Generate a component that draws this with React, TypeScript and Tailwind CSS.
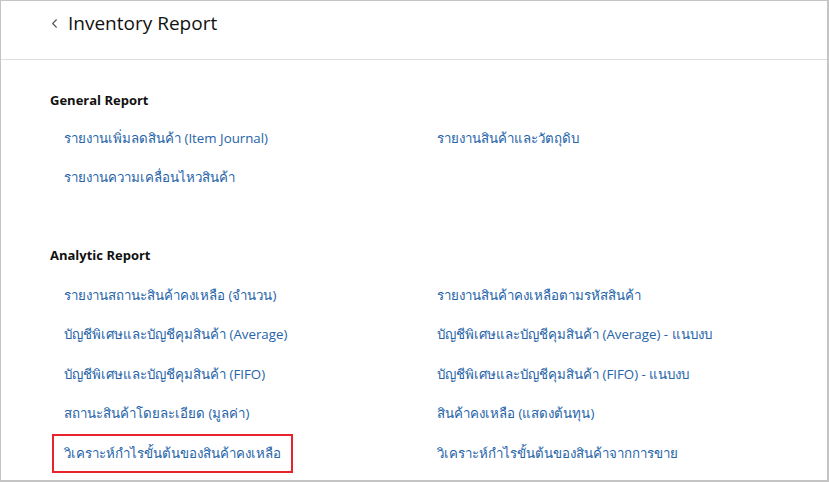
import { ChevronLeft } from "lucide-react";

const general: [string, string | null][] = [
  ["รายงานเพิ่มลดสินค้า (Item Journal)", "รายงานสินค้าและวัตถุดิบ"],
  ["รายงานความเคลื่อนไหวสินค้า", null],
];

const analytic: [string, string][] = [
  ["รายงานสถานะสินค้าคงเหลือ (จำนวน)", "รายงานสินค้าคงเหลือตามรหัสสินค้า"],
  ["บัญชีพิเศษและบัญชีคุมสินค้า (Average)", "บัญชีพิเศษและบัญชีคุมสินค้า (Average) - แนบงบ"],
  ["บัญชีพิเศษและบัญชีคุมสินค้า (FIFO)", "บัญชีพิเศษและบัญชีคุมสินค้า (FIFO) - แนบงบ"],
  ["สถานะสินค้าโดยละเอียด (มูลค่า)", "สินค้าคงเหลือ (แสดงต้นทุน)"],
  ["วิเคราะห์กำไรขั้นต้นของสินค้าคงเหลือ", "วิเคราะห์กำไรขั้นต้นของสินค้าจากการขาย"],
];

function ReportLink({ label, boxed }: { label: string; boxed?: boolean }) {
  return (
    <div className="h-[39.5px] flex items-center">
      <a
        href="#"
        className={
          boxed
            ? "text-[13.3px] text-[#2563a8] border-2 border-[#e8232b] h-[39px] flex items-center pl-[10px] pr-[10px] -ml-[12px]"
            : "text-[13.3px] text-[#2563a8]"
        }
      >
        {label}
      </a>
    </div>
  );
}

export default function App() {
  return (
    <div
      className="w-[829px] h-[482px] bg-white border-t border-l border-b-2 border-r-2 border-[#c4c4c4] overflow-hidden"
      style={{ fontFamily: '"Open Sans", "Noto Sans", "Liberation Sans", sans-serif' }}
    >
      <header className="h-[59px] flex items-start pt-[8px] pl-[46px] gap-[6px] border-b border-[#dedede]">
        <ChevronLeft className="w-[15px] h-[15px] mt-[7px] text-[#555]" strokeWidth={1.75} />
        <h1 className="text-[19px] text-[#111]">Inventory Report</h1>
      </header>

      <div className="pl-[49px] pt-[31px]">
        <h2 className="text-[13px] font-bold text-[#111] h-[20px] flex items-center">General Report</h2>
        <div className="pl-[14px] pt-[8px] grid grid-cols-[373px_1fr]">
          {general.map(([a, b], i) => (
            <div key={i} className="contents">
              <ReportLink label={a} />
              {b ? <ReportLink label={b} /> : <div />}
            </div>
          ))}
        </div>

        <h2 className="text-[13px] font-bold text-[#111] h-[20px] flex items-center mt-[48px]">Analytic Report</h2>
        <div className="pl-[14px] pt-[10px] grid grid-cols-[373px_1fr]">
          {analytic.map(([a, b], i) => (
            <div key={i} className="contents">
              <ReportLink label={a} boxed={i === analytic.length - 1} />
              <ReportLink label={b} />
            </div>
          ))}
        </div>
      </div>
    </div>
  );
}
